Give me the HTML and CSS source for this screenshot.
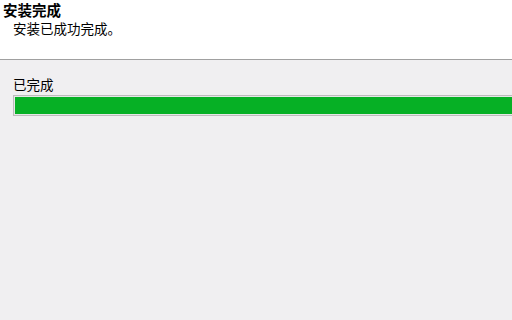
FILE: index.html
```html
<!DOCTYPE html>
<html>
<head>
<meta charset="utf-8">
<link rel="stylesheet" href="styles.css">
</head>
<body>
<div class="header">
  <div class="title">安装完成</div>
  <div class="subtitle">安装已成功完成。</div>
</div>
<div class="content">
  <div class="label">已完成</div>
  <div class="progress"><div class="fill"></div></div>
</div>
</body>
</html>
```
FILE: styles.css
```css
html, body {
  margin: 0;
  padding: 0;
  width: 512px;
  height: 320px;
  overflow: hidden;
  background: #f0eff1;
  font-family: "Noto Sans CJK SC", "Noto Sans", sans-serif;
  font-size: 13.5px;
  color: #000;
}
.header {
  background: #fff;
  height: 60px;
  border-bottom: 1px solid #a0a0a0;
  box-sizing: border-box;
  padding: 0 0 0 3px;
}
.title {
  font-weight: bold;
  font-size: 14.5px;
  line-height: 20px;
  height: 20px;
}
.subtitle {
  padding-left: 10px;
  line-height: 17px;
}
.content {
  padding: 15px 0 0 13px;
}
.label {
  line-height: 18px;
  height: 20px;
}
.progress {
  height: 21px;
  border: 1px solid #bcbcbc;
  border-right: none;
  box-sizing: border-box;
  background: #e6e6e6;
  padding: 1px 0 1px 1px;
}
.fill {
  height: 100%;
  width: 100%;
  background: #06b025;
}
```
